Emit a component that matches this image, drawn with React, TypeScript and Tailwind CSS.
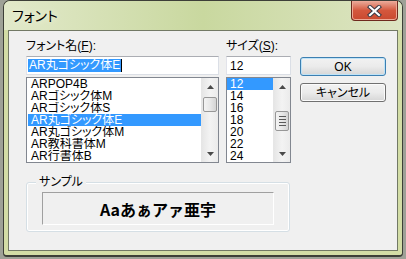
import React from "react";

const jp = "font-['Liberation_Sans','Noto_Sans_CJK_JP',sans-serif] [font-feature-settings:'palt']";

function UpArrow() {
  return (
    <svg width="7" height="4" viewBox="0 0 7 4">
      <path d="M0 4 L3.5 0 L7 4Z" fill="#4a4a4a" />
    </svg>
  );
}
function DownArrow() {
  return (
    <svg width="7" height="4" viewBox="0 0 7 4">
      <path d="M0 0 L3.5 4 L7 0Z" fill="#4a4a4a" />
    </svg>
  );
}

function ScrollBar({ spacer, thumb, grip }: { spacer: string; thumb: string; grip?: boolean }) {
  return (
    <div className="flex w-[17px] flex-col border-l border-[#e6e6e6] bg-gradient-to-r from-[#e6e6e6] via-[#f3f3f3] to-[#ebebeb]">
      <div className="flex h-[17px] items-center justify-center">
        <UpArrow />
      </div>
      <div className={spacer} />
      <div
        className={`${thumb} mx-[1px] flex flex-col items-center justify-center gap-[2px] rounded-[2px] border border-[#979797] bg-gradient-to-r from-[#f3f3f3] via-[#e8e8e8] to-[#d4d4d4]`}
      >
        {grip && (
          <>
            <div className="h-[1px] w-[7px] bg-[#5a5a5a]" />
            <div className="h-[1px] w-[7px] bg-[#5a5a5a]" />
            <div className="h-[1px] w-[7px] bg-[#5a5a5a]" />
            <div className="h-[1px] w-[7px] bg-[#5a5a5a]" />
          </>
        )}
      </div>
      <div className="flex-1" />
      <div className="flex h-[17px] items-center justify-center">
        <DownArrow />
      </div>
    </div>
  );
}

function ListBox({
  items,
  selected,
  width,
  rowClass,
  scroll,
}: {
  items: string[];
  selected: number;
  width: string;
  rowClass: string;
  scroll: React.ReactNode;
}) {
  return (
    <div className={`${width} flex h-[86px] border border-[#828790] bg-white`}>
      <div className="flex flex-1 flex-col">
        {items.map((it, i) => (
          <div
            key={it}
            className={`${rowClass} flex h-[12px] items-center overflow-hidden pl-[3px] text-[12px] leading-[12px] ${
              i === selected ? "bg-[#3399ff] text-white" : "text-black"
            }`}
          >
            {it}
          </div>
        ))}
      </div>
      {scroll}
    </div>
  );
}

function Button({ children, def }: { children: React.ReactNode; def?: boolean }) {
  return (
    <div
      className={`flex h-[19px] w-[86px] items-center justify-center rounded-[3px] border text-[12px] text-black ${
        def ? "border-[#3c7fb1] shadow-[inset_0_0_0_1px_#bfe3f7]" : "border-[#707070] shadow-[inset_0_0_0_1px_#fbfbfb]"
      } bg-gradient-to-b from-[#f2f2f2] via-[#ebebeb] to-[#d6d6d6]`}
    >
      {children}
    </div>
  );
}

export default function App() {
  const fonts = ["ARPOP4B", "ARゴシック体M", "ARゴシック体S", "AR丸ゴシック体E", "AR丸ゴシック体M", "AR教科書体M", "AR行書体B"];
  const sizes = ["12", "14", "16", "18", "20", "22", "24"];
  return (
    <div className={`h-[259px] w-[406px] bg-[#9ea197] pl-[3px] ${jp}`}>
      <div className="flex h-[257px] w-[400px] flex-col rounded-t-[7px] rounded-b-[4px] border border-[#3d3f38] border-b-2 bg-[#d3dda6]">
        {/* title bar */}
        <div className="flex h-[29px] items-start justify-between rounded-t-[6px] bg-gradient-to-r from-[#e2e9ca] via-[#c9d89f] to-[#dde5c3]">
          <div className="pl-[8px] pt-[6px] text-[14px] leading-[18px] text-black [text-shadow:0_0_6px_#f4f7e8]">
            フォント
          </div>
          <div className="mr-[4px] flex h-[20px] w-[47px] items-center justify-center rounded-b-[4px] border border-t-0 border-[#6e2a1e] bg-gradient-to-b from-[#e9ab9b] via-[#d4573d] to-[#c9492f] shadow-[inset_0_0_0_1px_#eea896]">
            <svg width="15" height="12" viewBox="0 0 15 12">
              <path d="M3 2 L12 10 M12 2 L3 10" stroke="#3b3b46" strokeWidth="4.2" strokeLinecap="square" />
              <path d="M3 2 L12 10 M12 2 L3 10" stroke="#ffffff" strokeWidth="2.2" strokeLinecap="square" />
            </svg>
          </div>
        </div>
        {/* client */}
        <div className="mx-[4px] mb-[4px] flex flex-1 flex-col border border-[#727965] bg-[#f0f0f0] pl-[17px] pt-[7px]">
          <div className="flex">
            {/* font name */}
            <div className="flex w-[193px] flex-col">
              <div className="h-[18px] text-[12px] leading-[16px] text-black">
                フォント名(<span className="underline">F</span>):
              </div>
              <div className="flex h-[19px] items-center border border-[#abadb3] border-b-[#dbdfe6] border-l-[#e2e3ea] border-r-[#dbdfe6] bg-white pl-[1px]">
                <span className="bg-[#3399ff] px-[1px] text-[12px] leading-[13px] text-white">AR丸ゴシック体E</span>
                <span className="h-[13px] w-[1px] bg-black" />
              </div>
              <div className="mt-[2px]">
                <ListBox
                  items={fonts}
                  selected={3}
                  width="w-[193px]"
                  rowClass="ml-[1px]"
                  scroll={<ScrollBar spacer="h-[2px]" thumb="h-[15px]" />}
                />
              </div>
            </div>
            {/* size */}
            <div className="ml-[7px] flex w-[65px] flex-col">
              <div className="h-[18px] text-[12px] leading-[16px] text-black">
                サイズ(<span className="underline">S</span>):
              </div>
              <div className="flex h-[19px] items-center border border-[#abadb3] border-b-[#dbdfe6] border-l-[#e2e3ea] border-r-[#dbdfe6] bg-white pl-[3px] text-[12px] text-black">
                12
              </div>
              <div className="mt-[2px]">
                <ListBox
                  items={sizes}
                  selected={0}
                  width="w-[65px]"
                  rowClass=""
                  scroll={<ScrollBar spacer="h-[16px]" thumb="h-[20px]" grip />}
                />
              </div>
            </div>
            {/* buttons */}
            <div className="ml-[9px] flex flex-col gap-[7px] pt-[19px]">
              <Button def>OK</Button>
              <Button>キャンセル</Button>
            </div>
          </div>
          {/* sample */}
          <div className="relative mt-[19px] h-[50px] w-[264px] rounded-[3px] border border-[#d5dfe5] px-[15px] pt-[9px] shadow-[inset_0_0_0_1px_#ffffff]">
            <div className="absolute left-[9px] top-[-8px] bg-[#f0f0f0] px-[3px] text-[12px] leading-[14px] text-black">
              サンプル
            </div>
            <div className="flex h-[33px] items-center justify-center border border-b-white border-l-[#a0a0a0] border-r-white border-t-[#a0a0a0] font-['Noto_Sans_CJK_JP',sans-serif] text-[16px] font-bold text-black [font-feature-settings:normal]">
              Aaあぁアァ亜宇
            </div>
          </div>
        </div>
      </div>
    </div>
  );
}
